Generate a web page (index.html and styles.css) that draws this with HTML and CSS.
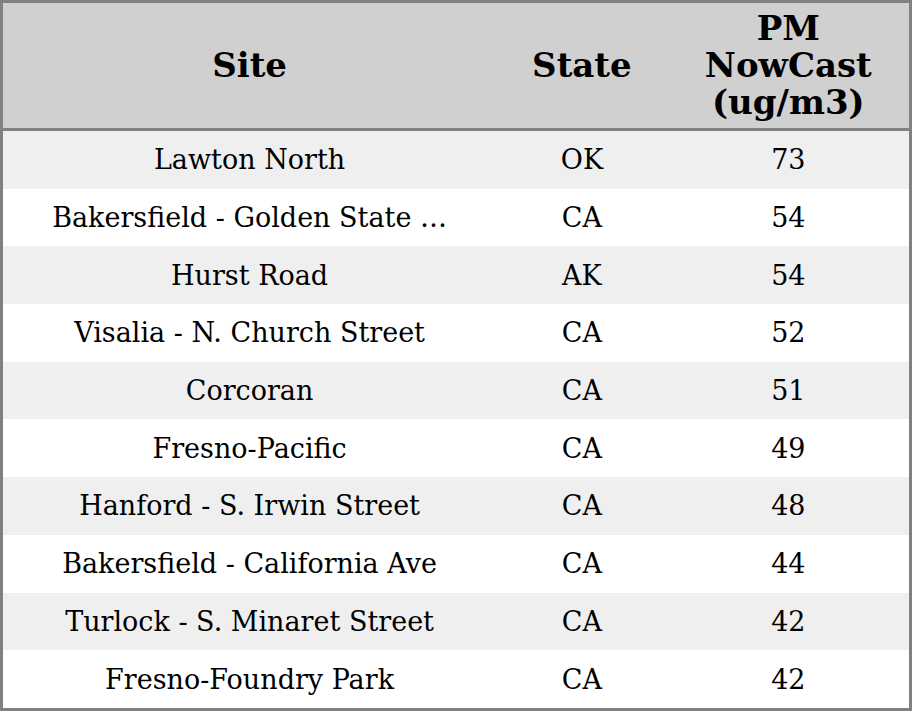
FILE: index.html
```html
<!DOCTYPE html>
<html>
<head>
<meta charset="utf-8">
<link rel="stylesheet" href="styles.css">
</head>
<body>
<table class="aq">
  <colgroup>
    <col class="c-site"><col class="c-state"><col class="c-pm">
  </colgroup>
  <thead>
    <tr><th>Site</th><th>State</th><th>PM<br>NowCast<br>(ug/m3)</th></tr>
  </thead>
  <tbody>
    <tr><td>Lawton North</td><td>OK</td><td>73</td></tr>
    <tr><td>Bakersfield - Golden State …</td><td>CA</td><td>54</td></tr>
    <tr><td>Hurst Road</td><td>AK</td><td>54</td></tr>
    <tr><td>Visalia - N. Church Street</td><td>CA</td><td>52</td></tr>
    <tr><td>Corcoran</td><td>CA</td><td>51</td></tr>
    <tr><td>Fresno-Pacific</td><td>CA</td><td>49</td></tr>
    <tr><td>Hanford - S. Irwin Street</td><td>CA</td><td>48</td></tr>
    <tr><td>Bakersfield - California Ave</td><td>CA</td><td>44</td></tr>
    <tr><td>Turlock - S. Minaret Street</td><td>CA</td><td>42</td></tr>
    <tr><td>Fresno-Foundry Park</td><td>CA</td><td>42</td></tr>
  </tbody>
</table>
</body>
</html>
```
FILE: styles.css
```css
html, body {
  margin: 0;
  padding: 0;
  background: #ffffff;
}
.aq {
  width: 912px;
  border-collapse: collapse;
  border: 3px solid #808080;
  table-layout: fixed;
  font-family: "DejaVu Serif", serif;
  color: #000;
}
.c-site { width: 493px; }
.c-state { width: 171px; }
.c-pm { width: 242px; }
.aq th {
  background: #d0d0d0;
  font-size: 34px;
  font-weight: bold;
  line-height: 37px;
  padding: 7px 0;
  height: 111px;
  border-bottom: 3px solid #808080;
  text-align: center;
  vertical-align: middle;
}
.aq td {
  font-size: 27px;
  line-height: 31px;
  padding: 0;
  height: 57.7px;
  text-align: center;
  vertical-align: middle;
  white-space: nowrap;
}
.aq tbody tr:nth-child(odd) td {
  background: #efefef;
}
```
